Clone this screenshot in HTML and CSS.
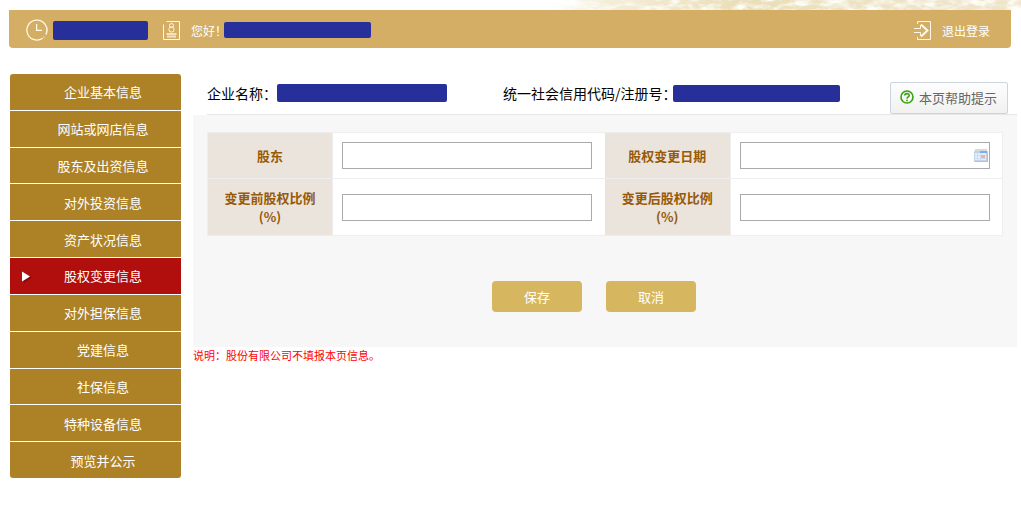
FILE: index.html
```html
<!DOCTYPE html>
<html lang="zh-CN">
<head>
<meta charset="utf-8">
<meta name="viewport" content="width=device-width, initial-scale=1">
<title>股权变更信息</title>
<link rel="stylesheet" href="styles.css">
</head>
<body>
<div class="banner">
  <svg class="banner-art" width="471" height="10" viewBox="0 0 471 10" aria-hidden="true">
    <defs>
      <linearGradient id="tone" x1="0" x2="1" y1="0" y2="0">
        <stop offset="0" stop-color="#efe5c8" stop-opacity="0"/>
        <stop offset=".12" stop-color="#efe5c8" stop-opacity=".7"/>
        <stop offset=".4" stop-color="#eadeb8"/>
        <stop offset=".8" stop-color="#eee4c9"/>
        <stop offset="1" stop-color="#eee4c9"/>
      </linearGradient>
      <filter id="stone" x="0" y="0" width="100%" height="100%">
        <feTurbulence type="fractalNoise" baseFrequency=".07 .16" numOctaves="4" seed="8"/>
        <feColorMatrix values="0 0 0 0 1  0 0 0 0 1  0 0 0 0 .98  2.4 1 0 0 -1.4"/>
      </filter>
    </defs>
    <rect width="471" height="10" fill="url(#tone)"/>
    <rect width="471" height="10" filter="url(#stone)"/>
  </svg>
</div>
<header class="topbar">
  <svg class="icon-clock" width="22" height="22" viewBox="0 0 22 22" aria-hidden="true">
    <path d="M19.8 15.6A10 10 0 1 0 16.7 19.2M20.4 14.4A10 10 0 0 0 20.9 9M18.2 17.8l-.6.6M10.6 5v6.3H16" />
  </svg>
  <span class="mask mask-date"></span>
  <svg class="icon-user" width="17" height="20" viewBox="0 0 17 20" aria-hidden="true">
    <path d="M3.5 1.5h13v18H.5v-15"/>
    <circle cx="8.5" cy="5.5" r="2"/>
    <circle cx="8.5" cy="9.5" r="2.6"/>
    <path d="M3.5 14h10M4 16.5h9" class="soft"/>
  </svg>
  <span class="greeting">您好！</span>
  <span class="mask mask-user"></span>
  <a class="logout" href="#">
    <svg width="18" height="20" viewBox="0 0 18 20" aria-hidden="true">
      <path d="M3.5 4V1.5h13v18h-13V17M0 8.5h6.5V5M0 12.5h6.5v3.5"/>
      <path d="M7 4.5l6.5 6L7 16.500" class="arrow"/>
    </svg>
    退出登录
  </a>
</header>
<div class="layout">
  <nav class="sidebar" aria-label="年报栏目">
    <a href="#">企业基本信息</a>
    <a href="#">网站或网店信息</a>
    <a href="#">股东及出资信息</a>
    <a href="#">对外投资信息</a>
    <a href="#">资产状况信息</a>
    <a href="#" class="active" aria-current="page">
      <svg class="marker" width="12" height="14" viewBox="0 0 12 14" aria-hidden="true"><path d="M3 4.500l8 3L3 13z" fill="#8c0808"/><path d="M1 1.500l8 5-8 5z" fill="#fff"/></svg>
      股权变更信息
    </a>
    <a href="#">对外担保信息</a>
    <a href="#">党建信息</a>
    <a href="#">社保信息</a>
    <a href="#">特种设备信息</a>
    <a href="#">预览并公示</a>
  </nav>
  <main class="content">
    <div class="company">
      <div class="company-name">企业名称：<span class="mask mask-name"></span></div>
      <div class="company-code"><span class="code-label">统一社会信用代码/注册号：</span><span class="mask mask-code"></span></div>
      <button type="button" class="help">
        <svg width="14" height="14" viewBox="0 0 14 14" aria-hidden="true">
          <circle cx="7" cy="7" r="6"/>
          <path d="M4.800 5.600C4.800 2.900 9.300 3 9.200 5.500 9.100 7 7 7 7 8.800M7 9.800v1.500"/>
        </svg>
        本页帮助提示
      </button>
    </div>
    <form class="panel">
      <table class="fields">
        <colgroup><col class="col-label"><col><col class="col-label"><col></colgroup>
        <tr class="row-single">
          <th scope="row"><label for="holder">股东</label></th>
          <td><input type="text" id="holder"></td>
          <th scope="row"><label for="date">股权变更日期</label></th>
          <td>
            <div class="date-field">
              <input type="text" id="date">
              <button type="button" class="date-pick" aria-label="选择日期">
                <svg width="14" height="13" viewBox="0 0 14 13" aria-hidden="true">
                  <path d="M1 0h12v3H1z" fill="#d9d9d5"/>
                  <path d="M0 2h14v11H0z" fill="#c3d3e6"/>
                  <path d="M6 2h7v2H6z" fill="#80aaf0"/>
                  <path d="M1 4h11v7H1z" fill="#e2eefb"/>
                  <path d="M1 6.500h11M1 9.500h11M3.500 4v7M6.500 4v7" stroke="#cbdff6" fill="none"/>
                  <path d="M7 6h4v3H7z" fill="#efb0a6"/>
                  <path d="M13.500 4v8.500H1" stroke="#a9c3df" fill="none"/>
                </svg>
              </button>
            </div>
          </td>
        </tr>
        <tr class="row-double">
          <th scope="row"><label for="before">变更前股权比例<br>(%)</label></th>
          <td><input type="text" id="before"></td>
          <th scope="row"><label for="after">变更后股权比例<br>(%)</label></th>
          <td><input type="text" id="after"></td>
        </tr>
      </table>
      <div class="actions">
        <button type="button">保存</button>
        <button type="button">取消</button>
      </div>
    </form>
    <p class="note">说明：股份有限公司不填报本页信息。</p>
  </main>
</div>
</body>
</html>
```
FILE: styles.css
```css
* { box-sizing: border-box; }

body {
  margin: 0;
  background: #fff;
  color: #000;
  font-family: "Noto Sans CJK SC", sans-serif;
  font-size: 13px;
}

a { color: inherit; text-decoration: none; }
button, input { font: inherit; }

.banner {
  display: flex;
  justify-content: flex-end;
  height: 10px;
  overflow: hidden;
}
.banner-art { display: block; }

.topbar {
  display: flex;
  align-items: center;
  margin: 0 10px 0 9px;
  padding: 2px 21px 0 17px;
  height: 38px;
  border-radius: 0 0 4px 4px;
  background: #d3ae64;
  color: #fff;
  font-size: 12px;
}
.topbar svg { fill: none; stroke: #fff8e6; }
.icon-clock { margin-right: 5px; stroke-width: 1.3; }
.icon-user { margin: 0 11px 0 15px; }
.icon-user .soft { stroke: #f3e3bd; stroke-width: 2; }
.greeting { width: 33px; white-space: nowrap; }

.mask {
  display: inline-block;
  flex: none;
  border-radius: 2px;
  background: #27309a;
}
.mask-date { width: 95px; height: 19px; }
.mask-user { width: 147px; height: 16px; }
.mask-name { width: 170px; height: 18px; }
.mask-code { width: 167px; height: 17px; }

.logout {
  display: flex;
  align-items: center;
  gap: 10px;
  margin-left: auto;
}
.logout .arrow { stroke-width: 2; }

.layout {
  display: flex;
  align-items: flex-start;
  gap: 12px;
  padding: 26px 4px 0 10px;
}

.sidebar {
  display: grid;
  grid-auto-rows: 1fr;
  gap: 1px;
  flex: 0 0 171px;
  min-height: 404px;
  border-radius: 3px;
  overflow: hidden;
  color: #fff;
}
.sidebar a {
  position: relative;
  display: flex;
  align-items: center;
  justify-content: center;
  padding-left: 15px;
  background: #ad8226;
}
.sidebar .active { background: #b00f0d; }
.marker { position: absolute; left: 11px; top: 12px; }

.content { flex: 1; min-width: 0; }

.company {
  display: flex;
  align-items: center;
  margin-left: 14px;
  height: 41px;
  border-bottom: 1px solid #e6e6e6;
  font-size: 14px;
}
.company > div {
  display: flex;
  align-items: center;
  padding-bottom: 2px;
  white-space: nowrap;
}
.company-name { width: 296px; }
.code-label { width: 170px; }

.help {
  display: flex;
  align-items: center;
  align-self: flex-end;
  gap: 5px;
  margin-left: auto;
  margin-right: 9px;
  padding: 0 10px 2px 9px;
  height: 32px;
  border: 1px solid #cbd5e0;
  border-radius: 2px;
  background: linear-gradient(#fdfdfd, #f1f1f1);
  color: #666;
  font-size: 13px;
  white-space: nowrap;
}
.help svg { flex: none; fill: none; stroke: #36a30d; stroke-width: 1.6; }

.panel {
  padding: 17px 14px 35px;
  background: #f7f7f7;
}

.fields {
  width: 100%;
  table-layout: fixed;
  border-collapse: collapse;
  background: #fff;
}
.col-label { width: 125px; }
.fields th,
.fields td {
  border: 1px solid #eee;
  vertical-align: middle;
}
.fields th {
  padding: 0;
  background: #ebe4dd;
  color: #965a08;
  font-weight: 700;
  line-height: 19px;
}
.fields td { padding: 0 12px 0 9px; }
.fields td:nth-child(2) { padding-right: 13px; border-right: 0; }
.fields th:nth-child(3) { border-left: 0; }
.row-single { height: 46px; }
.row-double { height: 57px; }
.fields input {
  display: block;
  width: 100%;
  height: 27px;
  padding: 0 6px;
  border: 1px solid #aaa;
  border-radius: 0;
  background: #fff;
}

.date-field { position: relative; }
.date-pick {
  position: absolute;
  top: 7px;
  right: 2px;
  padding: 0;
  border: 0;
  background: none;
}
.date-pick svg { display: block; }

.actions {
  display: flex;
  justify-content: center;
  gap: 24px;
  padding: 45px 22px 0 0;
}
.actions button {
  width: 90px;
  height: 31px;
  padding: 0;
  border: 0;
  border-radius: 4px;
  background: #d6b75f;
  color: #fff;
}

.note {
  margin: 0;
  color: #f00;
  font-size: 11px;
  line-height: 17px;
}
```
